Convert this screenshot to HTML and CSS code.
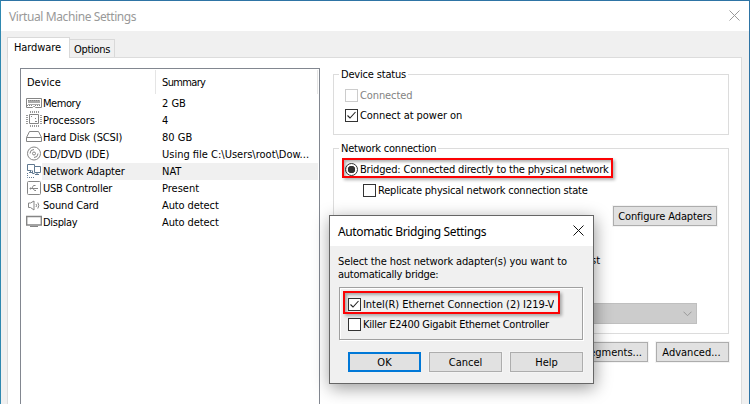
FILE: index.html
```html
<!DOCTYPE html>
<html lang="en">
<head>
<meta charset="utf-8">
<title>Virtual Machine Settings</title>
<link rel="stylesheet" href="styles.css">
</head>
<body>
<div class="window">
  <header class="titlebar">
    <span class="t-title">Virtual Machine Settings</span>
    <svg class="close" width="11" height="11" viewBox="0 0 11 11"><path d="M.5.5l10 10M10.5.5l-10 10"/></svg>
  </header>
  <nav class="tabs">
    <div class="tab active"><span class="t-hardware">Hardware</span></div>
    <div class="tab"><span class="t-options">Options</span></div>
  </nav>
  <main class="page">
    <section class="list">
      <div class="head"><span class="device">Device</span><span class="summary t-summary">Summary</span></div>
      <div class="row">
        <svg width="16" height="16" viewBox="0 0 16 16"><path d="M.5 3.500h15v9H9.500l-1-1h-1l-1 1H.5z"/><path fill="#aaa" stroke="none" d="M2 5h12v3H2zM2 9h12v1H2z"/><path stroke-dasharray="1 1" d="M2 5.500h12M1 10.500h6M9 10.500h6"/></svg>
        <span class="name t-memory">Memory</span><span>2 GB</span></div>
      <div class="row">
        <svg class="up" width="16" height="16" viewBox="0 0 16 16"><path d="M3.500 3.500h9v9h-9z"/><path class="pins" d="M4.500 0v2M6.500 0v2M8.500 0v2M10.500 0v2M12.500 0v2M4.500 14v2M6.500 14v2M8.500 14v2M10.500 14v2M12.500 14v2M0 4.500h2M0 6.500h2M0 8.500h2M0 10.500h2M0 12.500h2M14 4.500h2M14 6.500h2M14 8.500h2M14 10.500h2M14 12.500h2"/><path d="M5 5.500h1M9 10.500h2M9 7.500h1"/></svg>
        <span class="name t-processors">Processors</span><span>4</span></div>
      <div class="row">
        <svg class="up" width="16" height="16" viewBox="0 0 16 16"><path d="M3.500 3.500h9l3 6v4H.5v-4zM.5 9.500h15"/></svg>
        <span class="name t-disk">Hard Disk (SCSI)</span><span>80 GB</span></div>
      <div class="row">
        <svg width="16" height="16" viewBox="0 0 16 16"><circle cx="8" cy="7.500" r="6.500"/><circle cx="8" cy="7.500" r="1.500"/><path d="M4 7.500q0-4 4-4M12 7.500q0 4-4 4"/></svg>
        <span class="name t-cd">CD/DVD (IDE)</span><span class="t-file">Using file C:\Users\root\Dow...</span></div>
      <div class="row selected">
        <svg class="net up" width="16" height="16" viewBox="0 0 16 16"><path d="M5.500 8.500h-4v-6h7v2M3 10.500h3M4.500 8.500v2M8.500 11.500h-2v-3M8.500 4.500h6v6h-6zM9 12.500h4M11 10.500v2"/><path stroke-dasharray="1 1" d="M1.500 11v4.500H9"/></svg>
        <span class="name t-net">Network Adapter</span><span class="t-nat">NAT</span></div>
      <div class="row">
        <svg width="16" height="16" viewBox="0 0 16 16"><rect x="1.500" y="1.500" width="13" height="13" rx="1"/><path d="M4 8.500h8M6 8l1.500-2.500h2M7 8.500l1.500 2h1.500"/><circle cx="4.500" cy="8.500" r=".6"/></svg>
        <span class="name t-usb">USB Controller</span><span class="t-present">Present</span></div>
      <div class="row">
        <svg width="16" height="16" viewBox="0 0 16 16"><path d="M2.500 6h2L8 4v9L4.500 10.500h-2zM10 7q1.200 1.500 0 3M11.800 5.500q2 3 0 6"/></svg>
        <span class="name t-sound">Sound Card</span><span class="t-auto">Auto detect</span></div>
      <div class="row">
        <svg width="16" height="16" viewBox="0 0 16 16"><path stroke-width="1.400" d="M.7 2.500h14.600v8.500H.7z"/><path d="M4 12.500h8"/></svg>
        <span class="name t-display">Display</span><span class="t-auto">Auto detect</span></div>
    </section>
    <section class="settings">
      <div class="group status">
        <div class="legend"><span class="t-status">Device status</span></div>
        <div class="option disabled"><i class="box"></i><span class="t-connected">Connected</span></div>
        <div class="option second"><i class="box"><svg width="11" height="11" viewBox="0 0 11 11"><path d="M1.500 5.500l2.500 2.500 5.500-6"/></svg></i><span class="t-power">Connect at power on</span></div>
      </div>
      <div class="group network">
        <div class="legend"><span class="t-network">Network connection</span></div>
        <div class="option bridged"><i class="radio"></i><span class="t-bridged">Bridged: Connected directly to the physical network</span></div>
        <div class="option replicate"><i class="box"></i><span class="t-replicate">Replicate physical network connection state</span></div>
        <div class="button configure"><span class="t-configure">Configure Adapters</span></div>
        <div class="host">st</div>
        <div class="combo"><svg width="9" height="6" viewBox="0 0 9 6"><path d="M.5.7l4 4 4-4"/></svg></div>
      </div>
      <div class="actions">
        <div class="button segments"><span class="t-segments">egments...</span></div>
        <div class="button advanced"><span class="t-advanced">Advanced...</span></div>
      </div>
    </section>
  </main>
</div>
<div class="mark mark-bridged"></div>
<div class="dialog">
  <header class="dialog-title"><span class="t-dialog">Automatic Bridging Settings</span>
    <svg class="close" width="11" height="11" viewBox="0 0 11 11"><path d="M.5.5l10 10M10.5.5l-10 10"/></svg></header>
  <div class="prompt"><span class="t-select">Select the host network adapter(s) you want to</span><br><span class="t-bridge">automatically bridge:</span></div>
  <div class="adapters">
    <div class="option"><i class="box"><svg width="11" height="11" viewBox="0 0 11 11"><path d="M1.500 5.500l2.500 2.500 5.500-6"/></svg></i><span class="clip"><span class="t-intel">Intel(R) Ethernet Connection (2) I219-V</span></span></div>
    <div class="option"><i class="box"></i><span class="t-killer">Killer E2400 Gigabit Ethernet Controller</span></div>
  </div>
  <div class="buttons">
    <div class="button ok"><span>OK</span></div>
    <div class="button"><span class="t-cancel">Cancel</span></div>
    <div class="button"><span class="t-help">Help</span></div>
  </div>
  <div class="mark mark-intel"></div>
</div>
</body>
</html>
```
FILE: styles.css
```css
* { box-sizing: border-box; }
body {
  margin: 0; width: 750px; height: 404px; overflow: hidden;
  font: 11px/17px "DejaVu Sans Condensed", "DejaVu Sans", sans-serif;
  color: #000; white-space: nowrap; position: relative;
}
svg { display: block; fill: none; flex: none; }
.window {
  width: 750px; height: 404px; background: #f0f0f0;
  border: 1px solid #2e74a5; border-left-color: #2f88b0; border-bottom: 0; display: flex; flex-direction: column;
}
.titlebar {
  height: 30px; flex: none; background: #fff; color: #999; font: 12px/17px "Noto Sans", sans-serif;
  display: flex; justify-content: space-between; align-items: center; padding: 0 9px 0 8px;
}
.close { stroke: #999; margin-top: -2px; }
.tabs { display: flex; align-items: flex-end; height: 26px; padding-left: 6px; flex: none; }
.tab { height: 18px; width: 45px; border: 1px solid #d9d9d9; border-left: 0; border-bottom: 0; padding-left: 4px; line-height: 19px; }
.tab.active {
  width: 63px; height: 21px; margin-bottom: -1px; background: #fff;
  border-left: 1px solid #d9d9d9; padding-left: 6px; z-index: 1; line-height: 20px;
}
.page {
  flex: 1; margin: 0 7px 0 6px; background: #fff; border: 1px solid #dcdcdc; border-bottom: 0;
  display: flex; padding: 10px 11px 0 12px; min-height: 0;
}
.list { width: 300px; flex: none; border: 1px solid #828790; border-bottom: 0; padding: 1px 1px 0 5px; }
.head { height: 24px; display: flex; line-height: 25px; margin-bottom: 1px; border-right: 1px solid #e5e5e5; }
.device { width: 130px; padding-left: 1px; border-right: 1px solid #e5e5e5; }
.summary { margin-left: 6px; }
.row { display: flex; height: 17px; line-height: 17px; }
.row svg { stroke: #858585; }
.row .up { margin-top: -1px; }
.row .pins { stroke: #999; }
.row .net { stroke: #5f7890; }
.row .name { width: 120px; padding-left: 1px; flex: none; }
.selected { background: linear-gradient(90deg, #fff 16px, #f0f0f0 16px); }
.settings { margin: 6px 0 0 13px; width: 396px; }
.group { border: 1px solid #dcdcdc; }
.status { height: 61px; }
.network { height: 186px; margin-top: 13px; }
.legend { height: 17px; margin: -9px 0 0 5px; padding: 0 2px; width: fit-content; background: #fff; line-height: 18px; }
.option { display: flex; align-items: center; height: 17px; line-height: 17px; padding-left: 11px; }
.box { width: 13px; height: 13px; border: 1px solid #333; background: #fff; margin-right: 2px; flex: none; }
.box svg { stroke: #222; stroke-width: 1.100; }
.status .option { margin-top: 4px; }
.status .second { margin-top: 3px; }
.disabled { color: #838383; }
.disabled .box { border-color: #ccc; }
.bridged { height: 16px; margin: 4px 0 0 9px; padding-left: 2px; width: 267px; }
.radio { width: 13px; height: 13px; border: 1px solid #333; border-radius: 50%; background: radial-gradient(circle, #333 3.500px, #fff 4px); margin-right: 2px; flex: none; }
.replicate { margin: 5px 0 0 18px; line-height: 18px; }
.button { height: 20px; border: 1px solid #adadad; background: #e1e1e1; text-align: center; line-height: 19px; box-shadow: 0 0 0 1px #f4f4f4; }
.configure { width: 104px; margin: 7px 0 0 279px; }
.host { margin: 26px 0 0 257px; width: 13px; line-height: 18px; }
.combo { width: 200px; height: 21px; margin: 33px 0 0 163px; background: #ccc; border: 1px solid #bfbfbf; display: flex; align-items: center; justify-content: flex-end; padding-right: 4px; }
.combo svg { stroke: #999; }
.actions { display: flex; justify-content: flex-end; gap: 8px; margin-top: 8px; }
.segments { width: 104px; padding-right: 5px; text-align: right; }
.advanced { width: 73px; padding-right: 2px; }
.dialog {
  position: absolute; left: 329px; top: 215px; width: 265px; height: 169px;
  background: #f0f0f0; border: 1px solid #666; box-shadow: 1px 4px 16px rgba(0,0,0,.4);
}
.dialog-title { height: 30px; background: #fff; display: flex; justify-content: space-between; align-items: center; padding: 0 9px 0 8px; font: 12px/17px "Noto Sans", sans-serif; }
.dialog-title .close { stroke: #111; margin-top: -2px; }
.prompt { padding: 9px 0 0 8px; line-height: 13px; }
.adapters { height: 53px; margin: 6px 10px 0 9px; border: 1px solid #a0a0a0; padding: 8px 0 0; box-shadow: 1px 1px 0 #fff, inset 1px 1px 0 #fff; }
.adapters .option { padding-left: 8px; }
.adapters .option + .option { margin-top: 3px; }
.clip { overflow: hidden; width: 191px; }
.buttons { display: flex; gap: 8px; margin: 12px 0 0 18px; }
.buttons .button { width: 73px; }
.buttons .ok { border: 2px solid #0078d7; line-height: 17px; box-shadow: none; }
.mark { position: absolute; border: 2px solid #fc0204; box-shadow: 2px 2px 3px rgba(0,0,0,.3), inset 2px 2px 3px rgba(0,0,0,.3); }
.mark-bridged { left: 342px; top: 158px; width: 271px; height: 20px; }
.mark-intel { left: 13px; top: 75px; width: 217px; height: 23px; }

.t-title { letter-spacing: -.4px; }
.t-dialog { letter-spacing: -.37px; }
.t-hardware, .t-processors, .t-cd, .t-connected, .t-auto, .t-configure { letter-spacing: -.1px; }
.t-select { letter-spacing: -.12px; }
.t-intel, .t-power { letter-spacing: -.05px; }
.t-disk, .t-net { letter-spacing: -.13px; }
.t-bridged { letter-spacing: -.18px; }
.t-status, .t-sound { letter-spacing: -.18px; }
.t-usb, .t-network, .t-replicate { letter-spacing: -.21px; }
.t-killer, .t-bridge { letter-spacing: -.25px; }
.t-options, .t-display { letter-spacing: -.3px; }
.t-memory { letter-spacing: -.45px; }
.t-summary { letter-spacing: -.65px; }
```
